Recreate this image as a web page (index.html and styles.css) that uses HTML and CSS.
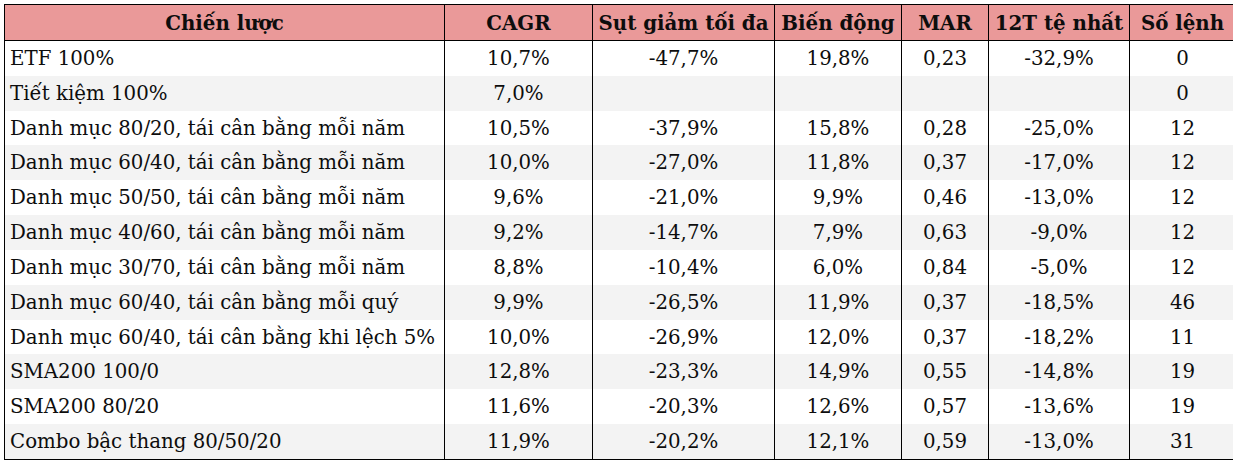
FILE: index.html
```html
<!DOCTYPE html>
<html lang="vi">
<head>
<meta charset="utf-8">
<title>Chiến lược</title>
<link rel="stylesheet" href="styles.css">
</head>
<body>
<table class="tbl">
  <colgroup>
    <col class="c-name">
    <col class="c-cagr">
    <col class="c-dd">
    <col class="c-vol">
    <col class="c-mar">
    <col class="c-worst">
    <col class="c-cnt">
  </colgroup>
  <thead>
    <tr>
      <th>Chiến lược</th>
      <th>CAGR</th>
      <th>Sụt giảm tối đa</th>
      <th>Biến động</th>
      <th>MAR</th>
      <th>12T tệ nhất</th>
      <th>Số lệnh</th>
    </tr>
  </thead>
  <tbody>
    <tr><td class="name">ETF 100%</td><td>10,7%</td><td>-47,7%</td><td>19,8%</td><td>0,23</td><td>-32,9%</td><td>0</td></tr>
    <tr><td class="name">Tiết kiệm 100%</td><td>7,0%</td><td></td><td></td><td></td><td></td><td>0</td></tr>
    <tr><td class="name">Danh mục 80/20, tái cân bằng mỗi năm</td><td>10,5%</td><td>-37,9%</td><td>15,8%</td><td>0,28</td><td>-25,0%</td><td>12</td></tr>
    <tr><td class="name">Danh mục 60/40, tái cân bằng mỗi năm</td><td>10,0%</td><td>-27,0%</td><td>11,8%</td><td>0,37</td><td>-17,0%</td><td>12</td></tr>
    <tr><td class="name">Danh mục 50/50, tái cân bằng mỗi năm</td><td>9,6%</td><td>-21,0%</td><td>9,9%</td><td>0,46</td><td>-13,0%</td><td>12</td></tr>
    <tr><td class="name">Danh mục 40/60, tái cân bằng mỗi năm</td><td>9,2%</td><td>-14,7%</td><td>7,9%</td><td>0,63</td><td>-9,0%</td><td>12</td></tr>
    <tr><td class="name">Danh mục 30/70, tái cân bằng mỗi năm</td><td>8,8%</td><td>-10,4%</td><td>6,0%</td><td>0,84</td><td>-5,0%</td><td>12</td></tr>
    <tr><td class="name">Danh mục 60/40, tái cân bằng mỗi quý</td><td>9,9%</td><td>-26,5%</td><td>11,9%</td><td>0,37</td><td>-18,5%</td><td>46</td></tr>
    <tr><td class="name">Danh mục 60/40, tái cân bằng khi lệch 5%</td><td>10,0%</td><td>-26,9%</td><td>12,0%</td><td>0,37</td><td>-18,2%</td><td>11</td></tr>
    <tr><td class="name">SMA200 100/0</td><td>12,8%</td><td>-23,3%</td><td>14,9%</td><td>0,55</td><td>-14,8%</td><td>19</td></tr>
    <tr><td class="name">SMA200 80/20</td><td>11,6%</td><td>-20,3%</td><td>12,6%</td><td>0,57</td><td>-13,6%</td><td>19</td></tr>
    <tr><td class="name">Combo bậc thang 80/50/20</td><td>11,9%</td><td>-20,2%</td><td>12,1%</td><td>0,59</td><td>-13,0%</td><td>31</td></tr>
  </tbody>
</table>
</body>
</html>
```
FILE: styles.css
```css
html, body {
  background: #ffffff;
}
body {
  margin: 4px;
  font-family: "DejaVu Serif", "Liberation Serif", serif;
  color: #0d0d0d;
}
.tbl {
  border-collapse: collapse;
  table-layout: fixed;
  width: 1231px;
  border: 1px solid #000;
  font-size: 19.8px;
}
.c-name { width: 440px; }
.c-cagr { width: 148px; }
.c-dd { width: 182px; }
.c-vol { width: 127px; }
.c-mar { width: 87px; }
.c-worst { width: 141px; }
.c-cnt { width: 106px; }
.tbl th {
  background: #ea9999;
  font-weight: bold;
  height: 35px;
  padding: 0;
  text-align: center;
  border: 1px solid #000;
  white-space: nowrap;
}
.tbl td {
  height: 34.83px;
  padding: 0;
  text-align: center;
  border-left: 1px solid #000;
  border-right: 1px solid #000;
  white-space: nowrap;
}
.tbl td.name {
  text-align: left;
  padding-left: 5px;
}
.tbl tbody tr:nth-child(even) td {
  background: #f3f3f3;
}
```
